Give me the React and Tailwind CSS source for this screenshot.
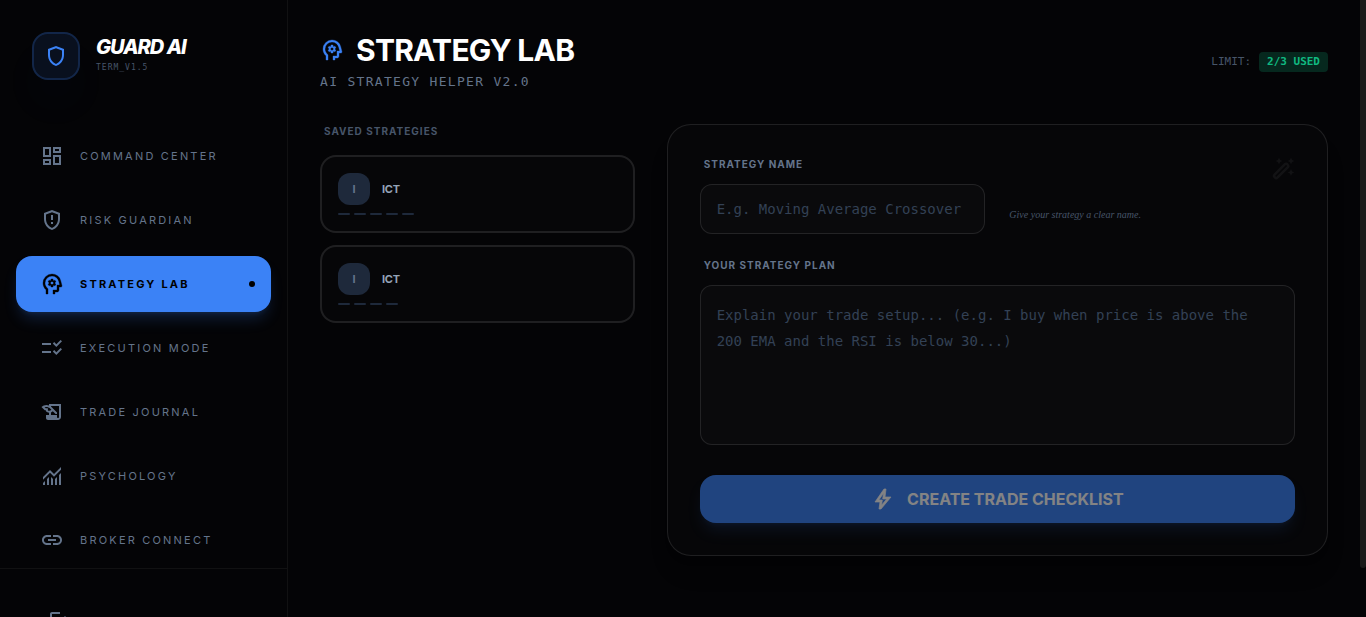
import { useState } from "react";
import {
  MdChecklistRtl,
  MdLink,
  MdLogout,
  MdOutlineDashboard,
  MdOutlineGppMaybe,
  MdOutlineHistoryEdu,
  MdOutlineShield,
} from "react-icons/md";

const PsychologyIcon = ({ className }) => (
  <svg viewBox="0 -960 960 960" fill="currentColor" stroke="currentColor" strokeWidth="14" className={className} aria-hidden="true">
    <path d="M440-360h80l6-50q8-3 14.5-7t11.5-9l46 20 40-68-40-30q2-8 2-16t-2-16l40-30-40-68-46 20q-5-5-11.5-9t-14.5-7l-6-50h-80l-6 50q-8 3-14.5 7t-11.5 9l-46-20-40 68 40 30q-2 8-2 16t2 16l-40 30 40 68 46-20q5 5 11.5 9t14.5 7l6 50Zm40-100q-25 0-42.5-17.5T420-520q0-25 17.5-42.5T480-580q25 0 42.5 17.5T540-520q0 25-17.5 42.5T480-460ZM240-80v-172q-57-52-88.5-121.5T120-520q0-150 105-255t255-105q125 0 221.5 73.5T827-615l52 205q5 19-7 34.5T840-360h-80v120q0 33-23.5 56.5T680-160h-80v80h-80v-160h160v-200h108l-38-155q-23-91-98-148t-172-57q-116 0-198 81t-82 197q0 60 24.5 114t69.5 96l26 24v208h-80Z" />
  </svg>
);

const MonitoringIcon = ({ className }) => (
  <svg viewBox="0 -960 960 960" fill="currentColor" className={className} aria-hidden="true">
    <path d="M120-120v-80l80-80v160h-80Zm160 0v-240l80-80v320h-80Zm160 0v-320l80 81v239h-80Zm160 0v-239l80-80v319h-80Zm160 0v-400l80-80v480h-80ZM120-327v-113l280-280 160 160 280-280v113L560-447 400-607 120-327Z" />
  </svg>
);

const BoltIcon = ({ className }) => (
  <svg viewBox="0 -960 960 960" fill="currentColor" stroke="currentColor" strokeWidth="28" className={className} aria-hidden="true">
    <path d="m422-232 207-248H469l29-227-185 267h139l-30 208ZM320-80l40-280H160l360-520h80l-40 320h240L400-80h-80Z" />
  </svg>
);

const WandIcon = ({ className }) => (
  <svg viewBox="0 0 24 24" fill="currentColor" className={className} aria-hidden="true">
    <path
      d="M3.4 17.8 14 7.200a1.500 1.500 0 0 1 2.100 0l.8.8a1.500 1.500 0 0 1 0 2.100L6.300 20.700a1.500 1.500 0 0 1-2.100 0l-.8-.8a1.500 1.500 0 0 1 0-2.100Z"
      fill="none"
      stroke="currentColor"
      strokeWidth="2.4"
    />
    <path d="m8 .8 1 2.200L11.200 4 9 5 8 7.200 7 5 4.800 4 7 3ZM20 .8l1 2.200L23.200 4 21 5l-1 2.200L19 5l-2.200-1L19 3ZM20 12.300l1 2.200 2.200 1-2.200 1-1 2.200-1-2.200-2.200-1 2.200-1Z" />
  </svg>
);

const navItems = [
  { id: "dashboard", label: "Command Center", Icon: MdOutlineDashboard },
  { id: "risk", label: "Risk Guardian", Icon: MdOutlineGppMaybe },
  { id: "lab", label: "Strategy Lab", Icon: PsychologyIcon },
  { id: "execution", label: "Execution Mode", Icon: MdChecklistRtl },
  { id: "journal", label: "Trade Journal", Icon: MdOutlineHistoryEdu },
  { id: "psychology", label: "Psychology", Icon: MonitoringIcon },
  { id: "broker", label: "Broker Connect", Icon: MdLink },
];

const strategies = [
  { id: 1, name: "ICT", rules: 5 },
  { id: 2, name: "ICT", rules: 4 },
];

const Sidebar = () => (
  <aside className="flex w-72 shrink-0 flex-col border-r border-white/5">
    <div className="flex gap-4 p-8 pb-12">
      <div className="flex size-12 items-center justify-center rounded-2xl border-2 border-[#3b82f6]/20 bg-[#3b82f6]/10 text-[#3b82f6] shadow-2xl shadow-[#3b82f6]/10">
        <MdOutlineShield className="size-6" />
      </div>
      <div>
        <p className="text-xl leading-[30px] font-extrabold tracking-tighter text-white italic">GUARD AI</p>
        <p className="font-['DejaVu_Sans_Mono',monospace] text-[8px] leading-3 tracking-[1px] text-[#475569]">TERM_V1.5</p>
      </div>
    </div>

    <nav className="flex min-h-0 flex-1 flex-col gap-2 overflow-hidden px-4">
      {navItems.map(({ id, label, Icon }) => {
        const active = id === "lab";
        return (
          <a
            key={id}
            href={`#${id}`}
            aria-current={active ? "page" : undefined}
            className={`flex h-14 shrink-0 items-center gap-4 rounded-2xl pr-4 pl-6 text-[11px] tracking-[0.2em] uppercase ${
              active ? "bg-[#3b82f6] font-bold text-black shadow-lg shadow-[#3b82f6]/20" : "text-[#64748b]"
            }`}
          >
            <Icon className="size-6" />
            <span>{label}</span>
            {active && <span className="ml-auto size-1.5 rounded-full bg-black" />}
          </a>
        );
      })}
    </nav>

    <div className="h-12 shrink-0 overflow-hidden border-t border-white/5 p-6">
      <button type="button" aria-label="Log out" className="flex px-6 py-4 text-[#64748b]">
        <MdLogout className="size-6" />
      </button>
    </div>
  </aside>
);

const StrategyCard = ({ name, rules }) => (
  <button type="button" className="w-full rounded-2xl border-2 border-white/10 bg-white/1 p-4 text-left">
    <span className="flex items-center gap-3">
      <span className="flex size-8 items-center justify-center rounded-xl bg-[#1e293b] text-[11px] font-bold text-[#64748b]">
        {name[0]}
      </span>
      <span className="text-[11px] font-bold tracking-tight text-[#94a3b8]">{name}</span>
    </span>
    <span className="mt-2 flex gap-1">
      {Array.from({ length: rules }, (_, i) => (
        <span key={i} className="h-0.5 w-3 rounded-full bg-[#1e293b]" />
      ))}
    </span>
  </button>
);

const StrategyForm = () => {
  const [name, setName] = useState("");
  const [plan, setPlan] = useState("");

  return (
    <form
      className="relative col-span-8 rounded-3xl border border-white/10 bg-white/1 p-8 shadow-xl"
      onSubmit={(e) => e.preventDefault()}
    >
      <WandIcon className="absolute top-8 right-8 size-6 text-white/5" />

      <div className="grid grid-cols-2 gap-6">
        <div>
          <label htmlFor="name" className="mb-3 block px-1 text-[10px] leading-[15px] font-bold tracking-widest text-[#64748b]">
            STRATEGY NAME
          </label>
          <input
            id="name"
            value={name}
            onChange={(e) => setName(e.target.value)}
            placeholder="E.g. Moving Average Crossover"
            className="block h-[50px] w-full rounded-xl border border-white/10 bg-white/2 px-4 font-['DejaVu_Sans_Mono',monospace] text-sm text-white outline-none placeholder:text-[#334155]"
          />
        </div>
        <p className="self-end pb-3 font-['Liberation_Serif',serif] text-[10px] leading-[15px] text-[#475569] italic">
          Give your strategy a clear name.
        </p>
      </div>

      <label htmlFor="plan" className="mt-6 mb-3 block px-1 text-[10px] leading-[15px] font-bold tracking-widest text-[#64748b]">
        YOUR STRATEGY PLAN
      </label>
      <textarea
        id="plan"
        value={plan}
        onChange={(e) => setPlan(e.target.value)}
        placeholder="Explain your trade setup... (e.g. I buy when price is above the 200 EMA and the RSI is below 30...)"
        className="block h-40 w-full resize-none rounded-xl border border-white/10 bg-white/2 p-4 font-['DejaVu_Sans_Mono',monospace] text-sm leading-[26px] text-white outline-none placeholder:text-[#334155]"
      />

      <button
        type="submit"
        disabled={!name || !plan}
        className="mt-[30px] flex h-12 w-full items-center justify-center gap-3 rounded-2xl bg-[#3b82f6] font-bold text-white shadow-lg shadow-[#3b82f6]/20 disabled:opacity-50"
      >
        <BoltIcon className="size-6" />
        CREATE TRADE CHECKLIST
      </button>
    </form>
  );
};

const App = () => (
  <div className="flex h-screen overflow-hidden bg-[#040406] font-['Inter',sans-serif]">
    <Sidebar />

    <main className="min-w-0 flex-1 overflow-hidden p-8">
      <header className="mb-8 flex items-center justify-between">
        <div>
          <h1 className="flex items-center gap-3 text-3xl font-bold tracking-tight text-white">
            <PsychologyIcon className="size-6 text-[#3b82f6]" />
            STRATEGY LAB
          </h1>
          <p className="mt-1 font-['DejaVu_Sans_Mono',monospace] text-[13px] leading-5 tracking-widest text-[#64748b]">
            AI STRATEGY HELPER V2.0
          </p>
        </div>
        <p className="flex items-center gap-2 font-['DejaVu_Sans_Mono',monospace] text-[11px] leading-4 text-[#475569]">
          LIMIT:
          <span className="rounded-sm bg-[#10b981]/20 px-2 py-0.5 font-bold text-[#10b981]">2/3 USED</span>
        </p>
      </header>

      <div className="grid grid-cols-12 items-start gap-8">
        <section className="col-span-4">
          <h2 className="mb-4 px-1 text-[10px] leading-[15px] font-bold tracking-widest text-[#475569]">SAVED STRATEGIES</h2>
          <div className="flex flex-col gap-3">
            {strategies.map((strategy) => (
              <StrategyCard key={strategy.id} {...strategy} />
            ))}
          </div>
        </section>
        <StrategyForm />
      </div>
    </main>

    {/* scroll track */}
    <div className="w-1.5 shrink-0">
      <div className="h-[92%] rounded-b-full bg-[#1a1a1a]" />
    </div>
  </div>
);

export default App;
